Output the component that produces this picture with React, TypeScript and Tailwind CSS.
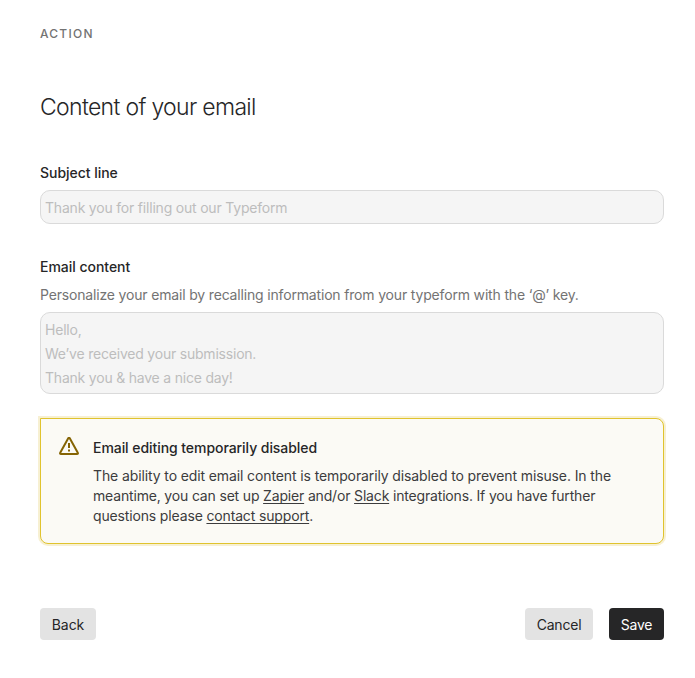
const link = "underline decoration-1 underline-offset-2 [text-decoration-skip-ink:none]";

export default function App() {
    return (
        <main className="h-[678px] w-[695px] bg-white pl-10 pr-[31px] pt-[26px] font-['Inter',sans-serif] text-[#262627]">
            <p className="text-xs leading-4 font-medium tracking-[1.25px] text-[#737373]">ACTION</p>
            <h1 className="mt-[49px] text-[23px] leading-8 font-light tracking-[-0.67px]">Content of your email</h1>

            <label className="mt-10 block text-sm leading-5 font-medium tracking-[-0.03px]">Subject line</label>
            <div className="mt-[7px] h-[34px] rounded-[10px] border border-[#dadada] bg-[#f5f5f5] px-1 py-[5px] text-sm leading-6 tracking-[-0.2px] text-[#bdbdbd]">
                Thank you for filling out our Typeform
            </div>

            <label className="mt-[33px] block text-sm leading-5 font-medium tracking-[-0.03px]">Email content</label>
            <p className="mt-2 text-sm leading-5 tracking-[-0.17px] text-[#737373]">
                Personalize your email by recalling information from your typeform with the ‘@’ key.
            </p>
            <div className="mt-[7px] h-[82px] rounded-[10px] border border-[#dadada] bg-[#f5f5f5] px-1 py-[5px] text-sm leading-6 tracking-[-0.21px] text-[#bdbdbd]">
                <p>Hello,</p>
                <p>We’ve received your submission.</p>
                <p>Thank you & have a nice day!</p>
            </div>

            <section className="mt-6 flex h-[126px] rounded-lg rounded-tl-none border border-[#e0c32e] bg-[#fbfaf5] pl-[18px] pt-[19px] shadow-[0_0_0_2px_#f7f0d2]">
                <svg className="mt-[-1px] h-5 w-5 shrink-0" viewBox="0 0 20 20" fill="none" stroke="#856404" strokeWidth="2">
                    <path d="M9.1 1.4 Q10 0.3 10.9 1.4 L18.8 15.8 Q19.3 17 18 17 H2 Q0.7 17 1.2 15.8 Z" strokeLinejoin="round" />
                    <path d="M10 6v5M10 12.5v2" />
                </svg>
                <div className="ml-[14px] text-sm leading-5">
                    <p className="font-medium tracking-[-0.06px]">Email editing temporarily disabled</p>
                    <div className="mt-2 text-[#3c3c3d]">
                        <p className="tracking-[-0.115px]">The ability to edit email content is temporarily disabled to prevent misuse. In the</p>
                        <p className="tracking-[-0.17px]">
                            meantime, you can set up <a className={link}>Zapier</a> and/or <a className={link}>Slack</a> integrations. If you have further
                        </p>
                        <p className="tracking-[-0.15px]">
                            questions please <a className={link}>contact support</a>.
                        </p>
                    </div>
                </div>
            </section>

            <footer className="mt-16 flex text-sm tracking-[-0.05px]">
                <button className="h-8 w-14 rounded bg-[#e3e3e3] pt-0.5">Back</button>
                <button className="ml-auto h-8 w-[68px] rounded bg-[#e3e3e3] pt-0.5 tracking-[-0.2px]">Cancel</button>
                <button className="ml-4 h-8 w-[55px] rounded bg-[#262627] pt-0.5 tracking-[-0.2px] text-white">Save</button>
            </footer>
        </main>
    );
}
